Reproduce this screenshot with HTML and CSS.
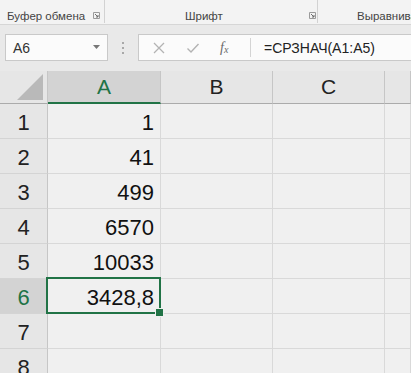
FILE: index.html
```html
<!DOCTYPE html>
<html lang="ru">
    <head>
        <meta charset="UTF-8" />
        <title>Книга1 - Excel</title>
        <link rel="stylesheet" href="styles.css">
    </head>
    <body>
        <div class="ribbon">
            <div class="group group-clipboard">
                <span class="group-label">Буфер обмена</span>
                <span class="launcher">
                    <svg width="7" height="7" viewBox="0 0 7 7"><path d="M0.5 0.5h6v6h-6z" fill="none" stroke="#9a9a9a"/><path d="M2 2l3 3M5 3v2H3" fill="none" stroke="#6d6d6d"/></svg>
                </span>
            </div>
            <div class="group group-font">
                <span class="group-label">Шрифт</span>
                <span class="launcher">
                    <svg width="7" height="7" viewBox="0 0 7 7"><path d="M0.5 0.5h6v6h-6z" fill="none" stroke="#9a9a9a"/><path d="M2 2l3 3M5 3v2H3" fill="none" stroke="#6d6d6d"/></svg>
                </span>
            </div>
            <div class="group group-align">
                <span class="group-label">Выравнивание</span>
            </div>
        </div>

        <div class="formula-bar">
            <div class="name-box">
                <span>A6</span>
                <svg class="name-arrow" width="7" height="4" viewBox="0 0 7 4"><path d="M0 0h7L3.5 4z" fill="#777"/></svg>
            </div>
            <div class="grip">
                <i></i><i></i><i></i>
            </div>
            <div class="formula-box">
                <div class="formula-buttons">
                    <svg width="14" height="14" viewBox="0 0 14 14"><path d="M2 2l10 10M12 2L2 12" stroke="#b3b3b3" stroke-width="1.3"/></svg>
                    <svg width="14" height="14" viewBox="0 0 14 14"><path d="M1.5 7.5l3.5 3.5L12.5 3" fill="none" stroke="#b3b3b3" stroke-width="1.4"/></svg>
                    <span class="fx">f<sub>x</sub></span>
                </div>
                <div class="formula-text">=СРЗНАЧ(A1:A5)</div>
            </div>
        </div>

        <div class="sheet">
            <div class="corner">
                <svg width="26" height="26" viewBox="0 0 26 26"><path d="M26 0V26H0z" fill="#b9b9b9"/></svg>
            </div>
            <div class="col-head col-active">A</div>
            <div class="col-head">B</div>
            <div class="col-head">C</div>
            <div class="col-head"></div>

            <div class="row-head">1</div>
            <div class="cell num">1</div>
            <div class="cell"></div><div class="cell"></div><div class="cell"></div>

            <div class="row-head">2</div>
            <div class="cell num">41</div>
            <div class="cell"></div><div class="cell"></div><div class="cell"></div>

            <div class="row-head">3</div>
            <div class="cell num">499</div>
            <div class="cell"></div><div class="cell"></div><div class="cell"></div>

            <div class="row-head">4</div>
            <div class="cell num">6570</div>
            <div class="cell"></div><div class="cell"></div><div class="cell"></div>

            <div class="row-head">5</div>
            <div class="cell num">10033</div>
            <div class="cell"></div><div class="cell"></div><div class="cell"></div>

            <div class="row-head row-active">6</div>
            <div class="cell num cell-selected">3428,8</div>
            <div class="cell"></div><div class="cell"></div><div class="cell"></div>

            <div class="row-head">7</div>
            <div class="cell"></div>
            <div class="cell"></div><div class="cell"></div><div class="cell"></div>

            <div class="row-head">8</div>
            <div class="cell"></div>
            <div class="cell"></div><div class="cell"></div><div class="cell"></div>
        </div>
    </body>
</html>
```

FILE: styles.css
```css
* {
    padding: 0;
    margin: 0;
    box-sizing: border-box;
}
body {
    font-family: 'Liberation Sans', Arial, sans-serif;
    background-color: #e9e9e9;
    color: #1b1b1b;
    width: 411px;
    height: 373px;
    overflow: hidden;
}

/* ribbon group captions */
.ribbon {
    display: flex;
    height: 25px;
    background-color: #f3f3f3;
    border-bottom: 1px solid #d6d6d6;
    white-space: nowrap;
    overflow: hidden;
}
.group {
    display: flex;
    flex-shrink: 0;
    align-items: flex-end;
    border-right: 1px solid #d2d2d2;
    margin-bottom: 1px;
    font-size: 11.5px;
    color: #444;
}
.group-label {
    line-height: 14px;
}
.group-clipboard {
    width: 105px;
    padding-left: 7px;
}
.group-clipboard .launcher {
    margin-left: 8px;
}
.group-font {
    width: 213px;
    padding-left: 80px;
}
.group-font .launcher {
    margin-left: 86px;
}
.group-align {
    flex: 1;
    min-width: 0;
    overflow: hidden;
    border-right: none;
    padding-left: 39px;
}
.launcher {
    display: flex;
    padding-bottom: 4px;
}

/* name box and formula line */
.formula-bar {
    display: flex;
    align-items: center;
    height: 46px;
    padding: 9px 0 10px 5px;
}
.name-box {
    display: flex;
    align-items: center;
    justify-content: space-between;
    width: 103px;
    height: 27px;
    padding: 0 7px 0 7px;
    background-color: #fbfbfb;
    border: 1px solid #c9c9c9;
    font-size: 14px;
    color: #333;
}
.name-arrow {
    margin-top: -2px;
}
.grip {
    display: flex;
    flex-direction: column;
    gap: 3px;
    width: 30px;
    align-items: center;
}
.grip i {
    display: block;
    width: 2px;
    height: 2px;
    background-color: #a8a8a8;
}
.formula-box {
    flex: 1;
    display: flex;
    height: 27px;
    background-color: #fbfbfb;
    border: 1px solid #c9c9c9;
    border-right: none;
}
.formula-buttons {
    display: flex;
    align-items: center;
    gap: 20px;
    width: 112px;
    padding-left: 13px;
    border-right: 1px solid #d4d4d4;
    margin: 3px 0;
}
.fx {
    font-family: 'Liberation Serif', 'Times New Roman', serif;
    font-style: italic;
    font-size: 14px;
    color: #6a6a6a;
}
.fx sub {
    font-size: 10px;
    vertical-align: -1px;
}
.formula-text {
    display: flex;
    align-items: center;
    padding-left: 13px;
    font-size: 14px;
    color: #222;
}

/* worksheet */
.sheet {
    display: grid;
    grid-template-columns: 48px 113px 112px 112px 1fr;
    grid-template-rows: 33px;
    grid-auto-rows: 35px;
    background-color: #f0f0f0;
    font-size: 22px;
}
.corner {
    display: flex;
    align-items: flex-end;
    justify-content: flex-end;
    padding: 0 4px 3px 0;
    background-color: #e6e6e6;
    border-right: 1px solid #c6c6c6;
    border-bottom: 1px solid #ababab;
}
.col-head {
    display: flex;
    align-items: center;
    justify-content: center;
    background-color: #e6e6e6;
    border-right: 1px solid #c6c6c6;
    border-bottom: 1px solid #ababab;
    font-size: 21px;
    color: #222;
}
.col-active {
    background-color: #d3d3d3;
    color: #217346;
    border-bottom: 2px solid #217346;
}
.row-head {
    display: flex;
    align-items: center;
    justify-content: center;
    padding-top: 3px;
    background-color: #e6e6e6;
    border-right: 1px solid #c6c6c6;
    border-bottom: 1px solid #d4d4d4;
    color: #222;
}
.row-active {
    background-color: #d3d3d3;
    color: #217346;
}
.cell {
    display: flex;
    align-items: center;
    padding-top: 3px;
    border-right: 1px solid #d9d9d9;
    border-bottom: 1px solid #d9d9d9;
}
.num {
    justify-content: flex-end;
    padding-right: 6px;
    color: #111;
}
.cell-selected {
    position: relative;
}
.cell-selected::after {
    content: '';
    position: absolute;
    top: -2px;
    left: -2px;
    right: -1px;
    bottom: -1px;
    border: 2px solid #217346;
}
.cell-selected::before {
    content: '';
    position: absolute;
    right: -4px;
    bottom: -4px;
    width: 7px;
    height: 7px;
    background-color: #217346;
    border: 1px solid #f0f0f0;
    z-index: 1;
}
```
